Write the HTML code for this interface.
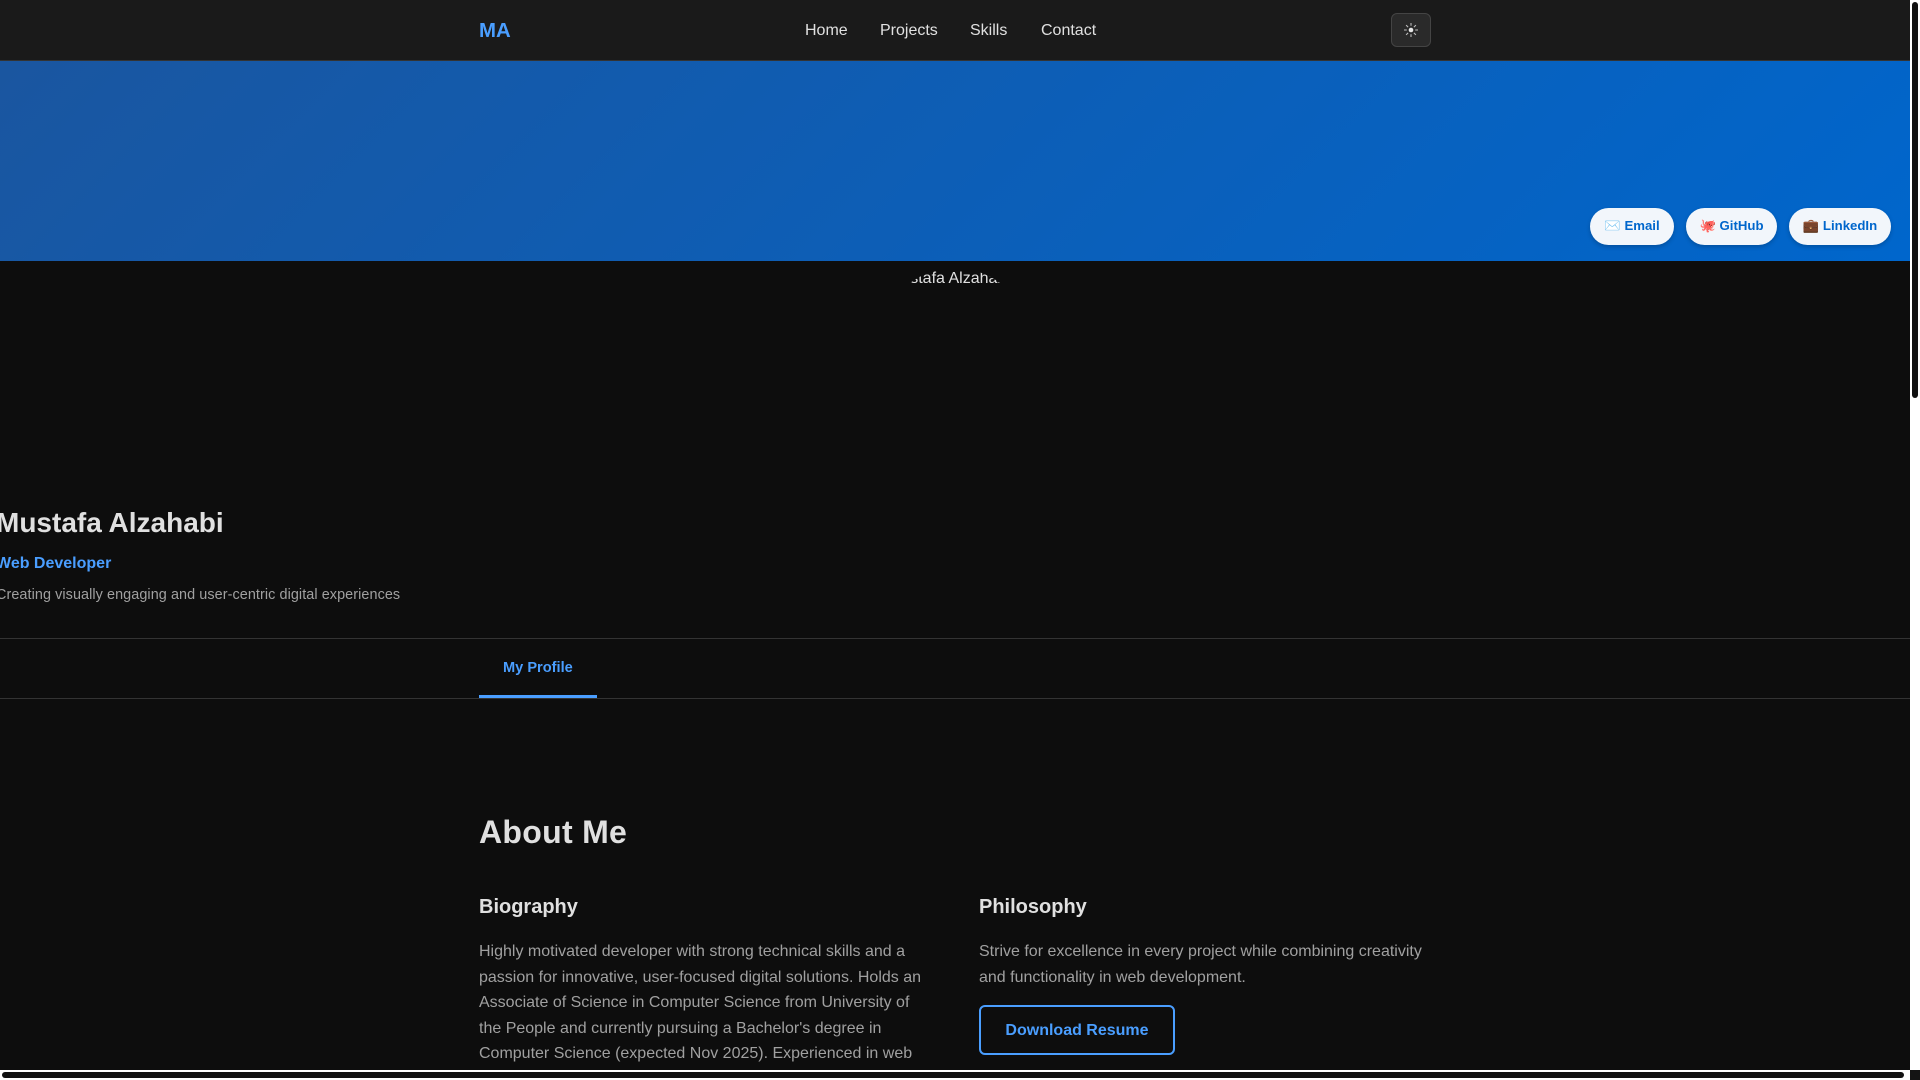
<!DOCTYPE html>
<html><head><meta charset="utf-8"><title>Mustafa Alzahabi</title>
<style>
html,body{margin:0;padding:0;width:1920px;height:1080px;overflow:hidden;background:#0d0d0d;font-family:"Liberation Sans",sans-serif;}
.a{position:absolute;white-space:nowrap;}
nav{position:absolute;left:0;top:0;width:1910px;height:60px;background:#1a1a1a;border-bottom:1px solid #333;}
.hero{position:absolute;left:0;top:61px;width:1910px;height:200px;background:linear-gradient(135deg,#1a56a0 0%,#0066cc 100%);}
.pill{position:absolute;top:208px;height:37px;line-height:36px;background:#f2f6fb;border-radius:19px;color:#0066cc;font-weight:700;font-size:13.2px;text-align:center;box-shadow:0 2px 4px rgba(0,0,0,.2);white-space:nowrap;font-family:"Liberation Sans","Noto Color Emoji",sans-serif;}
.p{color:#a0a0a0;font-size:16px;line-height:25.6px;}
</style></head><body>
<nav></nav>
<div class="a" style="left:479px;top:19px;font-size:20.4px;font-weight:700;color:#4a9eff;line-height:24px;">MA</div>
<div class="a" style="left:805px;top:21px;font-size:16px;line-height:19px;color:#e0e0e0;">Home</div>
<div class="a" style="left:880px;top:21px;font-size:16px;line-height:19px;color:#e0e0e0;">Projects</div>
<div class="a" style="left:970px;top:21px;font-size:16px;line-height:19px;color:#e0e0e0;">Skills</div>
<div class="a" style="left:1041px;top:21px;font-size:16px;line-height:19px;color:#e0e0e0;">Contact</div>
<div class="a" style="left:1391px;top:13px;width:38px;height:32px;background:#2a2a2a;border:1px solid #444;border-radius:6px;"></div>
<svg class="a" style="left:1403px;top:22px;" width="16" height="16" viewBox="0 0 16 16"><circle cx="8" cy="8" r="2.3" fill="#e8e8e8"/><path d="M8 1V3.8M8 12.2V15M1 8H3.8M12.2 8H15M3.1 3.1L5.1 5.1M10.9 10.9L12.9 12.9M3.1 12.9L5.1 10.9M10.9 5.1L12.9 3.1" stroke="#bdbdbd" stroke-width="1.1" fill="none"/></svg>
<div class="hero"></div>
<div class="pill" style="left:1590px;width:84px;">✉️ Email</div>
<div class="pill" style="left:1686px;width:91px;">🐙 GitHub</div>
<div class="pill" style="left:1789px;width:102px;">💼 LinkedIn</div>
<div class="a" style="left:880px;top:268px;width:150px;height:150px;border-radius:50%;overflow:hidden;color:#e0e0e0;font-size:16px;line-height:26px;">
<span style="position:absolute;left:8px;top:-2px;">Mustafa Alzahabi</span></div>
<div class="a" style="left:-4px;top:506px;font-size:28px;line-height:34px;font-weight:700;color:#e0e0e0;">Mustafa Alzahabi</div>
<div class="a" style="left:-4px;top:554px;font-size:16px;line-height:19px;font-weight:700;color:#4a9eff;">Web Developer</div>
<div class="a" style="left:-4px;top:586px;font-size:14.4px;letter-spacing:.08px;line-height:18px;color:#a0a0a0;">Creating visually engaging and user-centric digital experiences</div>
<div class="a" style="left:0;top:638px;width:1910px;height:59px;border-top:1px solid #333;border-bottom:1px solid #333;"></div>
<div class="a" style="left:479px;top:695px;width:118px;height:3px;background:#4a9eff;"></div>
<div class="a" style="left:503px;top:660px;font-size:14.6px;line-height:17px;font-weight:700;color:#4a9eff;">My Profile</div>
<div class="a" style="left:479px;top:813px;font-size:32px;letter-spacing:.3px;line-height:38px;font-weight:700;color:#e0e0e0;">About Me</div>
<div class="a" style="left:479px;top:895px;font-size:20px;line-height:25px;font-weight:700;color:#e0e0e0;">Biography</div>
<div class="a" style="left:979px;top:895px;font-size:20px;line-height:25px;font-weight:700;color:#e0e0e0;">Philosophy</div>
<div class="a p" style="left:479px;top:939px;">Highly motivated developer with strong technical skills and a<br>passion for innovative, user-focused digital solutions. Holds an<br>Associate of Science in Computer Science from University of<br>the People and currently pursuing a Bachelor's degree in<br>Computer Science (expected Nov 2025). Experienced in web</div>
<div class="a p" style="left:979px;top:939px;">Strive for excellence in every project while combining creativity<br>and functionality in web development.</div>
<div class="a" style="left:979px;top:1005px;width:192px;height:46px;border:2px solid #4a9eff;border-radius:6px;text-align:center;line-height:48px;font-size:16px;font-weight:700;color:#4a9eff;">Download Resume</div>
<div class="a" style="left:1910px;top:0;width:10px;height:1070px;background:#fff;"></div>
<div class="a" style="left:1912px;top:2px;width:6px;height:396px;background:#111;border-radius:3px;"></div>
<div class="a" style="left:0;top:1070px;width:1910px;height:10px;background:#fff;"></div>
<div class="a" style="left:2px;top:1072px;width:1902px;height:6px;background:#111;border-radius:3px;"></div>
<div class="a" style="left:1910px;top:1070px;width:10px;height:10px;background:#141414;"></div>
</body></html>
